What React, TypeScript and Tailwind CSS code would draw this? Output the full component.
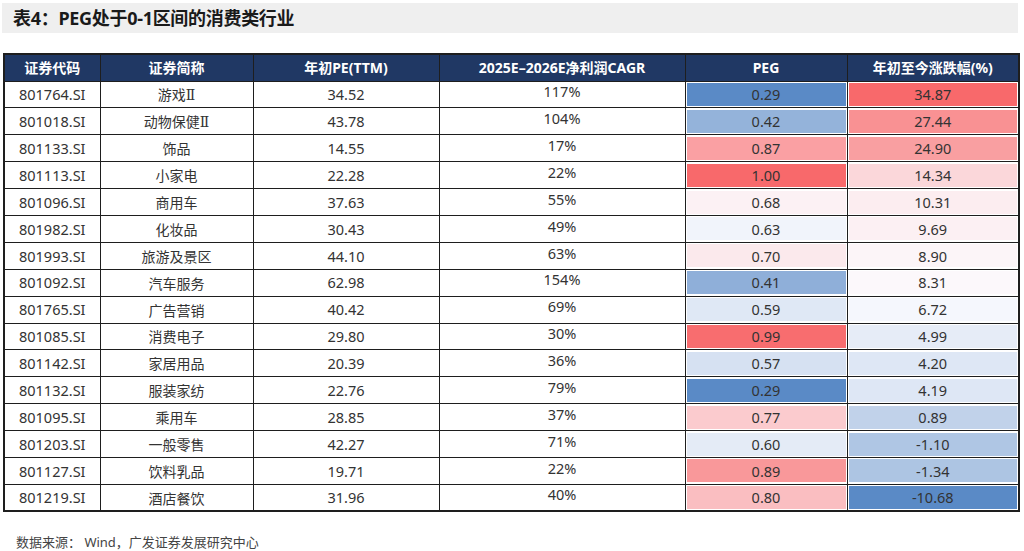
import React from 'react';

type Row = {
  code: string;
  name: string;
  roman?: boolean;
  pe: string;
  cagr: string;
  peg: number;
  chg: number;
};

const rows: Row[] = [
  { code: '801764.SI', name: '游戏', roman: true, pe: '34.52', cagr: '117%', peg: 0.29, chg: 34.87 },
  { code: '801018.SI', name: '动物保健', roman: true, pe: '43.78', cagr: '104%', peg: 0.42, chg: 27.44 },
  { code: '801133.SI', name: '饰品', pe: '14.55', cagr: '17%', peg: 0.87, chg: 24.9 },
  { code: '801113.SI', name: '小家电', pe: '22.28', cagr: '22%', peg: 1.0, chg: 14.34 },
  { code: '801096.SI', name: '商用车', pe: '37.63', cagr: '55%', peg: 0.68, chg: 10.31 },
  { code: '801982.SI', name: '化妆品', pe: '30.43', cagr: '49%', peg: 0.63, chg: 9.69 },
  { code: '801993.SI', name: '旅游及景区', pe: '44.10', cagr: '63%', peg: 0.7, chg: 8.9 },
  { code: '801092.SI', name: '汽车服务', pe: '62.98', cagr: '154%', peg: 0.41, chg: 8.31 },
  { code: '801765.SI', name: '广告营销', pe: '40.42', cagr: '69%', peg: 0.59, chg: 6.72 },
  { code: '801085.SI', name: '消费电子', pe: '29.80', cagr: '30%', peg: 0.99, chg: 4.99 },
  { code: '801142.SI', name: '家居用品', pe: '20.39', cagr: '36%', peg: 0.57, chg: 4.2 },
  { code: '801132.SI', name: '服装家纺', pe: '22.76', cagr: '79%', peg: 0.29, chg: 4.19 },
  { code: '801095.SI', name: '乘用车', pe: '28.85', cagr: '37%', peg: 0.77, chg: 0.89 },
  { code: '801203.SI', name: '一般零售', pe: '42.27', cagr: '71%', peg: 0.6, chg: -1.1 },
  { code: '801127.SI', name: '饮料乳品', pe: '19.71', cagr: '22%', peg: 0.89, chg: -1.34 },
  { code: '801219.SI', name: '酒店餐饮', pe: '31.96', cagr: '40%', peg: 0.8, chg: -10.68 },
];

// 三色刻度: 蓝(最小) - 白(中位数) - 红(最大)
const BLUE = [90, 138, 198];
const WHITE = [252, 252, 255];
const RED = [248, 105, 107];

function median(vals: number[]) {
  const s = [...vals].sort((a, b) => a - b);
  const m = Math.floor(s.length / 2);
  return s.length % 2 ? s[m] : (s[m - 1] + s[m]) / 2;
}

function mix(a: number[], b: number[], t: number) {
  const c = a.map((v, i) => Math.round(v + (b[i] - v) * t));
  return `rgb(${c[0]}, ${c[1]}, ${c[2]})`;
}

function scale(vals: number[]) {
  const min = Math.min(...vals);
  const max = Math.max(...vals);
  const mid = median(vals);
  return (v: number) =>
    v <= mid ? mix(BLUE, WHITE, (v - min) / (mid - min)) : mix(WHITE, RED, (v - mid) / (max - mid));
}

const pegColor = scale(rows.map((r) => r.peg));
const chgColor = scale(rows.map((r) => r.chg));

const headers = ['证券代码', '证券简称', '年初PE(TTM)', '2025E–2026E净利润CAGR', 'PEG', '年初至今涨跌幅(%)'];

const cell = 'border border-[#1e1e1e] p-0 text-center align-middle';

export default function App() {
  return (
    <div
      className="w-[1024px] h-[551px] bg-white overflow-hidden text-[#333]"
      style={{ fontFamily: '"Noto Sans", "Noto Sans CJK SC", sans-serif' }}
    >
      {/* 标题栏 */}
      <div className="mx-[2px] mt-[3px] w-[1016px] h-[30px] bg-[#efefef] flex items-center pl-[11px]">
        <span className="text-[18px] font-bold text-[#1a1a1a] tracking-[-0.3px]">表4：PEG处于0-1区间的消费类行业</span>
      </div>

      <div className="mt-[20px] ml-[3px]">
        <table className="border-collapse table-fixed w-[1015px] border-2 border-[#1e1e1e]">
          <colgroup>
            <col className="w-[96px]" />
            <col className="w-[153px]" />
            <col className="w-[186px]" />
            <col className="w-[246px]" />
            <col className="w-[162px]" />
            <col className="w-[172px]" />
          </colgroup>
          <thead>
            <tr className="h-[27px] bg-[#203864]">
              {headers.map((h) => (
                <th key={h} className={`${cell} text-white text-[14px] font-bold leading-none`}>
                  {h}
                </th>
              ))}
            </tr>
          </thead>
          <tbody className="text-[14.5px] leading-none">
            {rows.map((r) => (
              <tr key={r.code} className="h-[26.9px]">
                <td className={cell}>{r.code}</td>
                <td
                  className={`${cell} text-[14px]`}
                  style={{ fontFamily: '"Noto Sans CJK SC", "Noto Sans", sans-serif' }}
                >
                  {r.name}
                  {r.roman && <span style={{ fontFamily: '"DejaVu Serif", serif' }}>Ⅱ</span>}
                </td>
                <td className={cell}>{r.pe}</td>
                <td className={cell}>
                  <span className="relative -top-[3px]">{r.cagr}</span>
                </td>
                <td className={`${cell} p-[1px]`}>
                  <div className="h-[23px] flex items-center justify-center" style={{ background: pegColor(r.peg) }}>
                    {r.peg.toFixed(2)}
                  </div>
                </td>
                <td className={`${cell} p-[1px]`}>
                  <div className="h-[23px] flex items-center justify-center" style={{ background: chgColor(r.chg) }}>
                    {r.chg.toFixed(2)}
                  </div>
                </td>
              </tr>
            ))}
          </tbody>
        </table>
      </div>

      {/* 数据来源 */}
      <div className="mt-[24px] ml-[16px] text-[13px] leading-none text-[#444]">数据来源： Wind，广发证券发展研究中心</div>
    </div>
  );
}
